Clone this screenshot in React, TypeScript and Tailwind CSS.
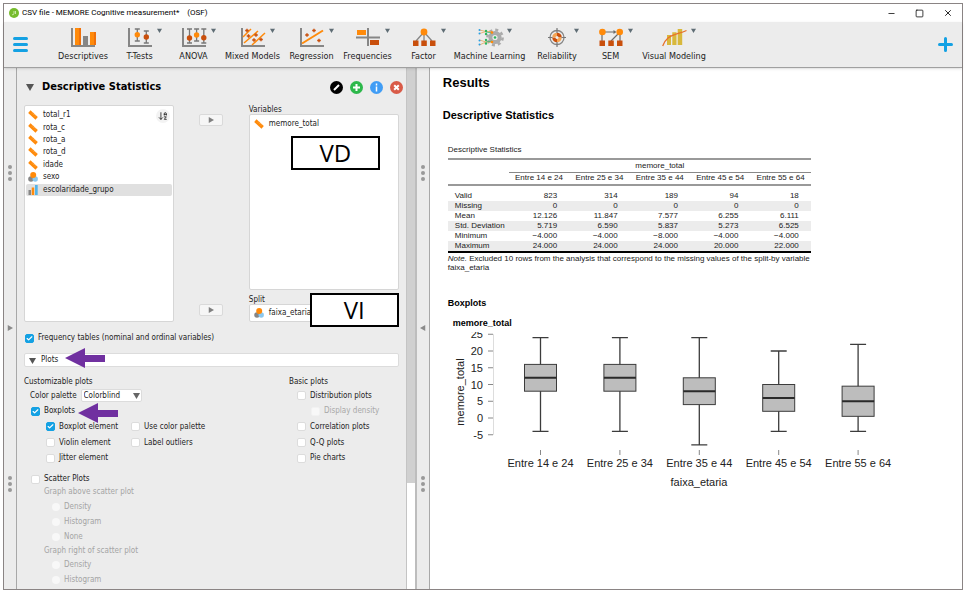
import type { ReactNode } from "react";
import { ArrowDownAZ, Check, Minus, Square, X } from "lucide-react";

const GRAY = "#868686";
const ORANGE = "#ff8a0a";
const RUST = "#c94f0c";

function Axes() {
  return <path d="M1 0v18h23" fill="none" stroke={GRAY} strokeWidth="2" />;
}

function ErrorBar({ x, top, bottom, dot, color }: { x: number; top: number; bottom: number; dot: number; color: string }) {
  return (
    <g>
      <path
        d={`M${x} ${top}V${bottom}M${x - 2.5} ${top}h5M${x - 2.5} ${bottom}h5`}
        stroke="#777"
        strokeWidth="1.3"
      />
      <circle cx={x} cy={dot} r="2.7" fill={color} />
    </g>
  );
}

function Cross({ x, y }: { x: number; y: number }) {
  return <path d={`M${x - 1.8} ${y}h3.6M${x} ${y - 1.8}v3.6`} stroke={RUST} strokeWidth="1.4" />;
}

const modules: { name: string; width: string; menu: boolean; icon: ReactNode }[] = [
  {
    name: "Descriptives",
    width: "w-[58px]",
    menu: false,
    icon: (
      <>
        <Axes />
        <path d="M4 0h6v17H4zM19 4h6v13h-6z" fill={ORANGE} />
        <path d="M8 0h2v17H8zM23 4h2v13h-2z" fill="#f0700a" />
        <path d="M12 8h5v9h-5z" fill={GRAY} />
      </>
    ),
  },
  {
    name: "T-Tests",
    width: "w-[55px]",
    menu: true,
    icon: (
      <>
        <Axes />
        <ErrorBar x={9.3} top={1} bottom={13} dot={6.7} color={ORANGE} />
        <ErrorBar x={18.3} top={3} bottom={15} dot={9} color={RUST} />
      </>
    ),
  },
  {
    name: "ANOVA",
    width: "w-[53px]",
    menu: true,
    icon: (
      <>
        <Axes />
        <ErrorBar x={7.5} top={1} bottom={15} dot={10} color={RUST} />
        <ErrorBar x={14.6} top={1} bottom={13} dot={7} color={ORANGE} />
        <ErrorBar x={21.8} top={1} bottom={15} dot={9.7} color={RUST} />
      </>
    ),
  },
  {
    name: "Mixed Models",
    width: "w-[65px]",
    menu: true,
    icon: (
      <>
        <Axes />
        <path d="M2 9l8-8M3 15L17 3M11 17L24 5" stroke={ORANGE} strokeWidth="1.5" />
        <Cross x={6} y={2.5} />
        <Cross x={7.5} y={8} />
        <Cross x={15} y={7} />
        <Cross x={13} y={12} />
        <Cross x={20} y={11.5} />
      </>
    ),
  },
  {
    name: "Regression",
    width: "w-[53px]",
    menu: true,
    icon: (
      <>
        <Axes />
        <path d="M2 15.5L23 2.5" stroke={ORANGE} strokeWidth="2" />
        <Cross x={7} y={7} />
        <Cross x={14} y={2.5} />
        <Cross x={19} y={12.5} />
      </>
    ),
  },
  {
    name: "Frequencies",
    width: "w-[59px]",
    menu: true,
    icon: (
      <>
        <path d="M0 9.5h24M12 0v18" stroke={GRAY} strokeWidth="2" />
        <path d="M1 2h9v5H1z" fill={ORANGE} />
        <path d="M14 12h9v5h-9z" fill={RUST} />
      </>
    ),
  },
  {
    name: "Factor",
    width: "w-[53px]",
    menu: true,
    icon: (
      <>
        <path d="M12 4v9M12 4l-8 9M12 4l8 9" stroke={GRAY} strokeWidth="1.3" />
        <circle cx="12" cy="4" r="3.4" fill={ORANGE} />
        <path d="M1 12.5h5.5V18H1zM9.3 12.5h5.5V18H9.3zM18 12.5h5.5V18H18z" fill={RUST} />
      </>
    ),
  },
  {
    name: "Machine Learning",
    width: "w-[79px]",
    menu: true,
    icon: (
      <>
        <circle cx="17" cy="9.5" r="4.6" fill="none" stroke="#ababab" strokeWidth="4" />
        <circle cx="17" cy="9.5" r="7.6" fill="none" stroke="#ababab" strokeWidth="2.6" strokeDasharray="3 2.97" />
        <path d="M1.5 2L8 3.5 1.5 5.5M1.5 12L8 14 1.5 17M8 3.5h6M8 14h5" stroke="#e9a45a" fill="none" strokeWidth=".8" />
        <path d="M8 4l6 1M8 14l6-1" stroke="#3cb371" strokeWidth=".8" />
        <g fill="#2b9fe0">
          <circle cx="1.5" cy="2" r="1" />
          <circle cx="1.5" cy="5.5" r="1" />
          <circle cx="1.5" cy="12.5" r="1" />
          <circle cx="1.5" cy="16.5" r="1" />
        </g>
        <g fill="#2db55d">
          <circle cx="8" cy="3" r="1.2" />
          <circle cx="8" cy="6" r="1.2" />
          <circle cx="8" cy="12" r="1.2" />
          <circle cx="8" cy="15.5" r="1.2" />
          <circle cx="17" cy="9.5" r="1.3" />
        </g>
        <circle cx="14" cy="4.5" r="1.3" fill={ORANGE} />
        <circle cx="14" cy="14" r="1.3" fill={ORANGE} />
      </>
    ),
  },
  {
    name: "Reliability",
    width: "w-[56px]",
    menu: true,
    icon: (
      <>
        <circle cx="12" cy="9.5" r="7" fill="none" stroke={GRAY} strokeWidth="1.3" />
        <circle cx="12" cy="9.5" r="4.8" fill="#eee" />
        <path d="M12 9.5V4.7A4.8 4.8 0 0 1 16.8 9.5zM12 9.5v4.8A4.8 4.8 0 0 1 7.2 9.5z" fill={RUST} />
        <path d="M12 9.5V4.7A4.8 4.8 0 0 0 7.2 9.5zM12 9.5v4.8a4.8 4.8 0 0 0 4.8-4.8z" fill="#f5a555" />
        <path d="M12 0v5M12 14v5M3 9.5h4.5M16.5 9.5H21" stroke="#777" strokeWidth="1.2" />
        <circle cx="12" cy="9.5" r="1.5" fill="#eee" />
      </>
    ),
  },
  {
    name: "SEM",
    width: "w-[51px]",
    menu: true,
    icon: (
      <>
        <path d="M3 4h13M3 4v9M21 4v9M21 4l-9 9" stroke="#6b6b6b" strokeWidth="1.2" />
        <path d="M14.5 2l3 2-3 2z" fill="#6b6b6b" />
        <circle cx="3.4" cy="4" r="3.3" fill={ORANGE} />
        <circle cx="20.7" cy="4" r="3.3" fill={ORANGE} />
        <path d="M.5 12.5H6V18H.5zM9.3 12.5h5.5V18H9.3zM18 12.5h5.5V18H18z" fill={RUST} />
      </>
    ),
  },
  {
    name: "Visual Modeling",
    width: "w-[76px]",
    menu: true,
    icon: (
      <>
        <path d="M5 7h4v10H5zM10.3 4.3h4.2V17h-4.2zM15.7 1h4.5v16h-4.5z" fill="#d8b83c" />
        <path d="M.7 18C4 9 9 8 13 6.5S19 5 24.5 2.5" fill="none" stroke="#e8702a" strokeWidth="1.3" />
      </>
    ),
  },
];

function ScaleIcon() {
  return (
    <svg viewBox="0 0 10 10" className="size-[10px] shrink-0">
      <path d="M2.5.3L9.8 7 7.5 9.7.2 3z" fill={ORANGE} />
      <path d="M4 3.5l1-1M5.5 5l1-1M7 6.4l1-1" stroke="#ffc98a" strokeWidth=".6" />
    </svg>
  );
}

function NominalIcon() {
  return (
    <svg viewBox="0 0 10 10" className="size-[10px] shrink-0">
      <circle cx="3" cy="7" r="2.8" fill={GRAY} />
      <circle cx="7.2" cy="7" r="2.7" fill="#8cc8ee" />
      <circle cx="5.2" cy="3.1" r="3" fill={ORANGE} />
    </svg>
  );
}

function OrdinalIcon() {
  return (
    <svg viewBox="0 0 10 10" className="size-[10px] shrink-0">
      <path d="M.5 5H3v5H.5z" fill={GRAY} />
      <path d="M3.7 2.5h2.5V10H3.7z" fill={ORANGE} />
      <path d="M7 0h2.7v10H7z" fill="#52b4ea" />
    </svg>
  );
}

function Triangle({ dir, className }: { dir: "down" | "right" | "left"; className?: string }) {
  const d = { down: "M0 1h8L4 8z", right: "M1 0v8l7-4z", left: "M7 0v8L0 4z" }[dir];
  return (
    <svg viewBox="0 0 8 8" className={className} fill="currentColor" aria-hidden="true">
      <path d={d} />
    </svg>
  );
}

function CheckBox({ label, checked, disabled }: { label: string; checked?: boolean; disabled?: boolean }) {
  return (
    <label className={disabled ? "flex items-center gap-1 text-[#a8a8a8]" : "flex items-center gap-1"}>
      <span className="grid size-[9px] shrink-0 place-items-center">
        <input
          type="checkbox"
          defaultChecked={checked}
          disabled={disabled}
          className="peer col-start-1 row-start-1 size-[9px] appearance-none rounded-xs border border-[#dcdcdc] bg-white checked:border-[#14a1e3] checked:bg-[#14a1e3] disabled:border-[#f2f2f2] disabled:bg-[#f8f8f8]"
        />
        <Check className="pointer-events-none col-start-1 row-start-1 hidden size-[7px] text-white peer-checked:block" strokeWidth={4} />
      </span>
      <span className="whitespace-nowrap">{label}</span>
    </label>
  );
}

function RadioGroup({ name, options }: { name: string; options: string[] }) {
  return (
    <>
      {options.map((o) => (
        <label key={o} className="flex items-center gap-1">
          <input type="radio" name={name} disabled className="size-2 appearance-none rounded-full bg-[#f8f8f8]" />
          {o}
        </label>
      ))}
    </>
  );
}

function MoveButton({ label }: { label: string }) {
  return (
    <button type="button" aria-label={label} className="flex h-3 w-6 items-center justify-center rounded-xs border border-[#dadada] bg-[#f6f6f6] text-[#808080]">
      <Triangle dir="right" className="size-[6px]" />
    </button>
  );
}

function Dots() {
  return (
    <div className="flex flex-col items-center gap-[2px]">
      <i className="size-1 rounded-full bg-[#999]" />
      <i className="size-1 rounded-full bg-[#999]" />
      <i className="size-1 rounded-full bg-[#999]" />
    </div>
  );
}

function Splitter({ dir }: { dir: "left" | "right" }) {
  return (
    <div className="flex flex-col items-center border-r border-[#a8a8a8] bg-[#ececec] pt-[97px] text-[#8a8a8a]">
      <Dots />
      <button type="button" aria-label="Toggle panel" className="mt-[144px] mb-[145px]">
        <Triangle dir={dir} className="size-[6px]" />
      </button>
      <Dots />
    </div>
  );
}

function Arrow({ className }: { className: string }) {
  return (
    <svg viewBox="0 0 40 20" className={className} aria-hidden="true">
      <path d="M0 10L20 0v7h20v7H20v6z" fill="#7030a0" />
    </svg>
  );
}

const variables: { name: string; icon: ReactNode; selected?: boolean }[] = [
  { name: "total_r1", icon: <ScaleIcon /> },
  { name: "rota_c", icon: <ScaleIcon /> },
  { name: "rota_a", icon: <ScaleIcon /> },
  { name: "rota_d", icon: <ScaleIcon /> },
  { name: "idade", icon: <ScaleIcon /> },
  { name: "sexo", icon: <NominalIcon /> },
  { name: "escolaridade_grupo", icon: <OrdinalIcon />, selected: true },
];

function VariableAssignment() {
  return (
    <div className="flex h-[217px] justify-between">
      <div className="relative w-[150px] rounded-xs border border-[#d6d6d6] bg-white px-px pt-[3px]">
        <ul className="grid h-[87px] auto-rows-fr">
          {variables.map((v) => (
            <li
              key={v.name}
              className={v.selected ? "flex items-center gap-[5px] rounded-xs bg-[#e0e0e0] pl-[2px]" : "flex items-center gap-[5px] pl-[2px]"}
            >
              {v.icon}
              {v.name}
            </li>
          ))}
        </ul>
        <button type="button" aria-label="Sort variables" className="absolute top-[3px] right-[3px] grid size-[14px] place-items-center rounded-full bg-[#f3f3f3]">
          <ArrowDownAZ className="size-[10px]" strokeWidth={2} />
        </button>
      </div>

      <div className="flex flex-col justify-between pt-[9px] pb-[6px]">
        <MoveButton label="Move to Variables" />
        <MoveButton label="Move to Split" />
      </div>

      <div className="relative flex w-[150px] flex-col">
        <div className="h-[9px] leading-[9px]">Variables</div>
        <div className="flex-1 rounded-xs border border-[#d6d6d6] bg-white pt-[3px] pl-1">
          <div className="flex items-center gap-[5px] leading-[12px]">
            <ScaleIcon />
            memore_total
          </div>
        </div>
        <div className="mt-[5px] h-[9px] leading-[9px]">Split</div>
        <div className="flex h-[18px] items-center gap-[5px] rounded-xs border border-[#d6d6d6] bg-white pl-1">
          <NominalIcon />
          faixa_etaria
        </div>
        <div className="absolute top-[31px] left-[42px] grid h-[34px] w-[89px] place-items-center border-2 border-black bg-white font-['Open_Sans',sans-serif] text-[24px] leading-[30px] text-black">
          VD
        </div>
        <div className="absolute top-[188px] left-[61px] grid h-[34px] w-[89px] place-items-center border-2 border-black bg-white font-['Open_Sans',sans-serif] text-[24px] leading-[30px] text-black">
          VI
        </div>
      </div>
    </div>
  );
}

function AnalysisForm() {
  return (
    <form className="min-w-0 flex-1 px-[7px] pt-[10px] text-[#222]">
      <header className="flex h-[18px] items-center">
        <Triangle dir="down" className="ml-[2px] size-2 text-[#555]" />
        <h1 className="ml-2 flex-1 text-[11px] font-bold whitespace-nowrap text-black">Descriptive Statistics</h1>
        <div className="-mr-1 flex gap-[7px]">
          <button type="button" aria-label="Edit title" className="size-[13px]">
            <svg viewBox="0 0 13 13">
              <circle cx="6.5" cy="6.5" r="6.5" fill="#000" />
              <path d="M4 9l5-5" stroke="#fff" strokeWidth="2" />
            </svg>
          </button>
          <button type="button" aria-label="Duplicate" className="size-[13px]">
            <svg viewBox="0 0 13 13">
              <circle cx="6.5" cy="6.5" r="6.5" fill="#2db84b" />
              <path d="M3 6.5h7M6.5 3v7" stroke="#fff" strokeWidth="2" />
            </svg>
          </button>
          <button type="button" aria-label="Help" className="size-[13px]">
            <svg viewBox="0 0 13 13">
              <circle cx="6.5" cy="6.5" r="6.5" fill="#419df5" />
              <path d="M6.5 2.5v2M6.5 5.5v5" stroke="#fff" strokeWidth="1.5" />
            </svg>
          </button>
          <button type="button" aria-label="Remove" className="size-[13px]">
            <svg viewBox="0 0 13 13">
              <circle cx="6.5" cy="6.5" r="6.5" fill="#d95b48" />
              <path d="M4.2 4.2l4.6 4.6M8.8 4.2L4.2 8.8" stroke="#fff" strokeWidth="2" />
            </svg>
          </button>
        </div>
      </header>

      <div className="mt-[9px]">
        <VariableAssignment />
      </div>

      <div className="mt-[10px] pl-px">
        <CheckBox label="Frequency tables (nominal and ordinal variables)" checked />
      </div>

      <div className="relative mt-[9px]">
        <button type="button" aria-expanded="true" className="flex h-[14px] w-full items-center gap-[5px] rounded-xs border border-[#dcdcdc] bg-white pl-1">
          <Triangle dir="down" className="size-[7px] text-[#555]" />
          Plots
        </button>
        <Arrow className="absolute -top-[5px] left-[41px] h-5 w-10" />
      </div>

      <div className="mt-[9px] grid grid-cols-[265px_1fr]">
        <div>
          <h2 className="h-3 leading-[12px]">Customizable plots</h2>
          <div className="grid h-[78px] auto-rows-fr pl-[6px]">
            <div className="flex items-center gap-1">
              <label htmlFor="palette" className="whitespace-nowrap">Color palette</label>
              <span className="relative">
                <select id="palette" className="block h-[13px] w-[61px] appearance-none rounded-xs border border-[#dcdcdc] bg-white pl-[2px] leading-[11px]">
                  <option>Colorblind</option>
                </select>
                <Triangle dir="down" className="pointer-events-none absolute top-[3px] right-[2px] size-[7px] text-[#666]" />
              </span>
            </div>
            <div className="relative flex items-center pl-px">
              <CheckBox label="Boxplots" checked />
              <Arrow className="absolute -top-px left-12 h-5 w-10" />
            </div>
            <div className="grid grid-cols-[85px_1fr] items-center pl-4">
              <CheckBox label="Boxplot element" checked />
              <CheckBox label="Use color palette" />
            </div>
            <div className="grid grid-cols-[85px_1fr] items-center pl-4">
              <CheckBox label="Violin element" />
              <CheckBox label="Label outliers" />
            </div>
            <div className="flex items-center pl-4">
              <CheckBox label="Jitter element" />
            </div>
          </div>
        </div>
        <div>
          <h2 className="h-3 leading-[12px]">Basic plots</h2>
          <div className="grid h-[78px] auto-rows-fr pl-2">
            <CheckBox label="Distribution plots" />
            <div className="flex items-center pl-[14px]">
              <CheckBox label="Display density" disabled />
            </div>
            <CheckBox label="Correlation plots" />
            <CheckBox label="Q-Q plots" />
            <CheckBox label="Pie charts" />
          </div>
        </div>
      </div>

      <div className="mt-[7px] pl-[7px]">
        <CheckBox label="Scatter Plots" />
        <fieldset className="pl-[13px] text-[#a4a4a4]">
          <legend className="h-[14px] leading-[14px]">Graph above scatter plot</legend>
          <div className="grid h-[46px] auto-rows-fr pl-2">
            <RadioGroup name="above" options={["Density", "Histogram", "None"]} />
          </div>
        </fieldset>
        <fieldset className="pl-[13px] text-[#a4a4a4]">
          <legend className="h-3 leading-[12px]">Graph right of scatter plot</legend>
          <div className="grid h-[31px] auto-rows-fr pl-2">
            <RadioGroup name="right" options={["Density", "Histogram"]} />
          </div>
        </fieldset>
      </div>
    </form>
  );
}

const groups = ["Entre 14 e 24", "Entre 25 e 34", "Entre 35 e 44", "Entre 45 e 54", "Entre 55 e 64"];

const rows: [string, string[]][] = [
  ["Valid", ["823", "314", "189", "94", "18"]],
  ["Missing", ["0", "0", "0", "0", "0"]],
  ["Mean", ["12.126", "11.847", "7.577", "6.255", "6.111"]],
  ["Std. Deviation", ["5.719", "6.590", "5.837", "5.273", "6.525"]],
  ["Minimum", ["−4.000", "−4.000", "−8.000", "−4.000", "−4.000"]],
  ["Maximum", ["24.000", "24.000", "24.000", "20.000", "22.000"]],
];

function StatsTable() {
  return (
    <table className="w-[363px] table-fixed border-collapse text-[8px] leading-[10px]">
      <caption className="pb-[3px] text-left">Descriptive Statistics</caption>
      <colgroup>
        <col className="w-[61px]" />
      </colgroup>
      <thead>
        <tr className="h-[13px] border-t-2 border-[#999]">
          <td />
          <th colSpan={5} className="border-b border-[#888] font-normal">memore_total</th>
        </tr>
        <tr className="h-[13px] border-b-2 border-[#999]">
          <td />
          {groups.map((g) => (
            <th key={g} scope="col" className="font-normal whitespace-nowrap">{g}</th>
          ))}
        </tr>
      </thead>
      <tbody className="before:block before:h-[5px] before:content-['']">
        {rows.map(([name, values]) => (
          <tr key={name} className="even:bg-[#ececec]">
            <th scope="row" className="pl-[7px] text-left font-normal whitespace-nowrap">{name}</th>
            {values.map((v, i) => (
              <td key={i} className="pr-3 text-right">{v}</td>
            ))}
          </tr>
        ))}
      </tbody>
      <tfoot>
        <tr className="border-t-2 border-black">
          <td colSpan={6} className="pt-px leading-[9px]">
            <i>Note.</i> Excluded 10 rows from the analysis that correspond to the missing values of the split-by variable faixa_etaria
          </td>
        </tr>
      </tfoot>
    </table>
  );
}

// min, q1, median, q3, max for each group
const boxes = [
  [-4, 8, 12, 16, 24],
  [-4, 8, 12, 16, 24],
  [-8, 4, 8, 12, 24],
  [-4, 2, 6, 10, 20],
  [-4, 0.5, 5, 9.5, 22],
];

function Boxplot() {
  const y = (v: number) => 86 - v * 3.35;
  const x = (i: number) => 92.5 + i * 79.4;
  return (
    <svg width="450" height="160" className="block" role="img" aria-label="Boxplots of memore_total by faixa_etaria">
      <g className="fill-[#222] text-[11px]">
        <text transform="translate(16 60) rotate(-90)" textAnchor="middle">memore_total</text>
        {[25, 20, 15, 10, 5, 0, -5].map((t) => (
          <text key={t} x="35" y={y(t) + 4} textAnchor="end">{t}</text>
        ))}
        {groups.map((g, i) => (
          <text key={g} x={x(i)} y="135" textAnchor="middle">{g}</text>
        ))}
        <text x="251" y="154" textAnchor="middle">faixa_etaria</text>
      </g>
      <path d={`M45.5 ${y(25)}V${y(-5)}`} stroke="#ddd" />
      {[25, 20, 15, 10, 5, 0, -5].map((t) => (
        <path key={t} d={`M40 ${y(t)}h5`} stroke="#888" />
      ))}
      {boxes.map(([min, q1, med, q3, max], i) => (
        <g key={i} stroke="#3c3c3c">
          <path d={`M${x(i)} 118v5`} stroke="#888" />
          <path d={`M${x(i)} ${y(max)}V${y(min)}M${x(i) - 8} ${y(max)}h16M${x(i) - 8} ${y(min)}h16`} strokeWidth="1.3" />
          <rect x={x(i) - 16} y={y(q3)} width="32" height={y(q1) - y(q3)} fill="#bdbdbd" />
          <path d={`M${x(i) - 16} ${y(med)}h32`} stroke="#2a2a2a" strokeWidth="2" />
        </g>
      ))}
    </svg>
  );
}

export default function App() {
  return (
    <div className="flex min-h-screen flex-col bg-white px-[3px] pt-[3px] pb-[5px] font-['DejaVu_Sans_Condensed','DejaVu_Sans',sans-serif] text-[8px] leading-[12px] text-[#222]">
      <div className="flex flex-1 flex-col border border-[#8a8484] bg-white">
        <div className="flex h-[18px] items-center pl-[5px] font-[Roboto,sans-serif] leading-[18px] text-black">
          <svg viewBox="0 0 10 10" className="size-[10px]">
            <circle cx="5" cy="5" r="5" fill="#77bc2e" />
            <path d="M3 6.5c1.3.8 2-.2 2-1.5V3M6.5 3v3" fill="none" stroke="#d4efb5" strokeWidth=".9" />
          </svg>
          <span className="ml-[3px] whitespace-nowrap">CSV file - MEMORE Cognitive measurement*</span>
          <span className="ml-2 flex-1">(OSF)</span>
          <div className="flex gap-[19px] pr-[9px]">
            <button type="button" aria-label="Minimize"><Minus className="size-[9px]" strokeWidth={2} /></button>
            <button type="button" aria-label="Maximize"><Square className="size-[9px]" strokeWidth={2} /></button>
            <button type="button" aria-label="Close"><X className="size-[10px]" strokeWidth={2} /></button>
          </div>
        </div>

        <nav className="z-10 flex h-[46px] items-center border-b border-[#a0a0a0] bg-[#ececec] pr-[9px] pl-[9px] text-[9px] shadow-sm">
          <button type="button" aria-label="Main menu" className="flex w-[41px] flex-col gap-[3px]">
            <i className="h-[3px] w-[15px] rounded-full bg-[#14a1e3]" />
            <i className="h-[3px] w-[15px] rounded-full bg-[#14a1e3]" />
            <i className="h-[3px] w-[15px] rounded-full bg-[#14a1e3]" />
          </button>
          {modules.map((m) => (
            <button key={m.name} type="button" className={`${m.width} flex shrink-0 flex-col items-center gap-[3px]`}>
              <span className="grid w-full grid-cols-[1fr_24px_1fr]">
                <svg viewBox="0 0 24 20" className="col-start-2 h-5 w-6 overflow-visible">{m.icon}</svg>
                {m.menu && <Triangle dir="down" className="ml-[5px] size-[5px] text-[#5f6d75]" />}
              </span>
              <span className="leading-[11px] whitespace-nowrap">{m.name}</span>
            </button>
          ))}
          <button type="button" aria-label="Show modules" className="ml-auto">
            <svg viewBox="0 0 15 15" className="size-[15px]">
              <path d="M7.5 1.5v12M1.5 7.5h12" stroke="#14a1e3" strokeWidth="3" strokeLinecap="round" />
            </svg>
          </button>
        </nav>

        <main className="grid flex-1 grid-cols-[13px_minmax(0,429fr)_13px_minmax(0,571fr)]">
          <Splitter dir="right" />
          <section className="flex border-r-2 border-[#bdbdbd] bg-[#ececec]">
            <AnalysisForm />
            <div className="w-[9px] border-l border-[#c4c4c4] bg-white">
              <div className="h-[415px] bg-[#d0d0d0]" />
            </div>
          </section>
          <Splitter dir="left" />
          <section className="min-w-0 overflow-hidden pt-[7px] pl-[13px] font-['Liberation_Sans',Arial,sans-serif]">
            <h1 className="text-[13px] leading-[16px] font-bold text-black">Results</h1>
            <h2 className="mt-4 text-[11px] leading-[16px] font-bold text-black">Descriptive Statistics</h2>
            <div className="mt-[22px] ml-[5px]">
              <StatsTable />
              <h3 className="mt-[25px] text-[9px] leading-[12px] font-bold text-black">Boxplots</h3>
              <h4 className="mt-2 ml-[5px] text-[9px] leading-[12px] font-bold text-black">memore_total</h4>
              <div className="mt-[3px]">
                <Boxplot />
              </div>
            </div>
          </section>
        </main>
      </div>
    </div>
  );
}
